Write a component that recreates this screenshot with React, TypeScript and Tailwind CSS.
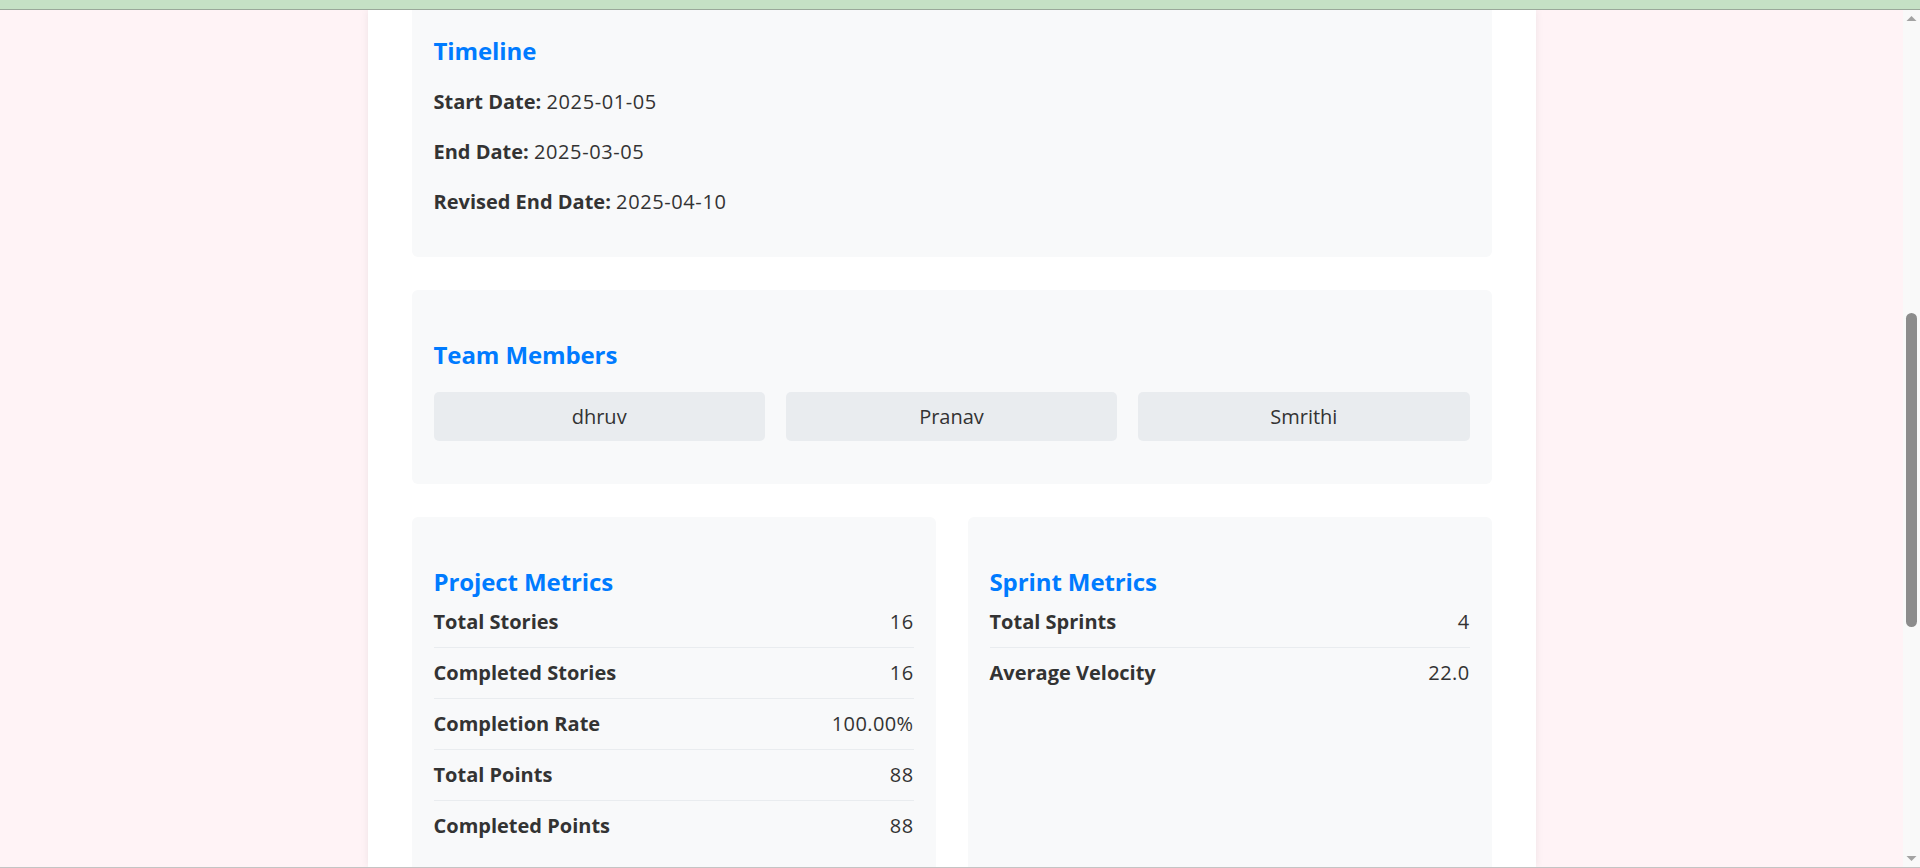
import React from "react";

const FONT = "font-['Segoe_UI','Open_Sans',sans-serif]";

function Heading({ children }: { children: React.ReactNode }) {
  return (
    <h3 className="text-[24px] leading-[30px] font-bold text-[#007bff] tracking-[-0.1px]">{children}</h3>
  );
}

function MetricRow({ label, value, last }: { label: string; value: string; last?: boolean }) {
  return (
    <div
      className={`flex justify-between py-[10px] leading-[30px] ${last ? "" : "border-b border-[#e9ecef]"}`}
    >
      <span className="font-bold">{label}</span>
      <span className="tracking-[0.4px]">{value}</span>
    </div>
  );
}

export default function App() {
  return (
    <div className={`w-[1920px] h-[868px] overflow-hidden flex flex-col text-[20px] text-[#333] ${FONT}`}>
      <div className="h-[9px] bg-[#c5e1c5] border-b border-[#9aa89a] box-content" />
      <div className="flex flex-1 min-h-0">
        <div className="flex-1 bg-[#fff3f6] overflow-hidden flex">
          <div className="w-[1168px] mx-auto bg-white px-[44px] shadow-[0_0_8px_rgba(0,0,0,0.07)] flex flex-col overflow-hidden">
            <div className="flex flex-col gap-[33px] mt-[-24px]">
              <section className="bg-[#f8f9fa] rounded-[6px] px-[22px] pt-[50px] pb-[40px]">
                <Heading>Timeline</Heading>
                <div className="mt-[21px] flex flex-col gap-[20px] leading-[30px]">
                  <p>
                    <strong className="font-bold">Start Date:</strong>{" "}
                    <span className="tracking-[0.6px]">2025-01-05</span>
                  </p>
                  <p>
                    <strong className="font-bold">End Date:</strong>{" "}
                    <span className="tracking-[0.6px]">2025-03-05</span>
                  </p>
                  <p>
                    <strong className="font-bold">Revised End Date:</strong>{" "}
                    <span className="tracking-[0.6px]">2025-04-10</span>
                  </p>
                </div>
              </section>

              <section className="bg-[#f8f9fa] rounded-[6px] px-[22px] pt-[50px] pb-[43px]">
                <Heading>Team Members</Heading>
                <div className="mt-[22px] grid grid-cols-3 gap-[21px]">
                  {["dhruv", "Pranav", "Smrithi"].map((m) => (
                    <div
                      key={m}
                      className="h-[49px] rounded-[5px] bg-[#e9ecef] flex items-center justify-center"
                    >
                      {m}
                    </div>
                  ))}
                </div>
              </section>

              <div className="grid grid-cols-2 gap-[32px]">
                <section className="bg-[#f8f9fa] rounded-[6px] px-[22px] pt-[50px] pb-[40px]">
                  <Heading>Project Metrics</Heading>
                  <MetricRow label="Total Stories" value="16" />
                  <MetricRow label="Completed Stories" value="16" />
                  <MetricRow label="Completion Rate" value="100.00%" />
                  <MetricRow label="Total Points" value="88" />
                  <MetricRow label="Completed Points" value="88" last />
                </section>
                <section className="bg-[#f8f9fa] rounded-[6px] px-[22px] pt-[50px] pb-[40px]">
                  <Heading>Sprint Metrics</Heading>
                  <MetricRow label="Total Sprints" value="4" />
                  <MetricRow label="Average Velocity" value="22.0" last />
                </section>
              </div>
            </div>
          </div>
        </div>
        <div className="w-[17px] bg-[#f9f9f9] flex flex-col items-center">
          <svg width="17" height="17" viewBox="0 0 17 17" className="shrink-0">
            <path d="M3.5 11 L8.5 6 L13.5 11 Z" fill="#a3a3a3" />
          </svg>
          <div className="flex-1 w-full flex flex-col items-center">
            <div className="mt-[286px] w-[11px] h-[314px] rounded-full bg-[#8c8c8c]" />
          </div>
          <svg width="17" height="17" viewBox="0 0 17 17" className="shrink-0">
            <path d="M3.5 6 L8.5 11 L13.5 6 Z" fill="#a3a3a3" />
          </svg>
        </div>
      </div>
      <div className="h-px bg-[#c4c4c4]" />
    </div>
  );
}
